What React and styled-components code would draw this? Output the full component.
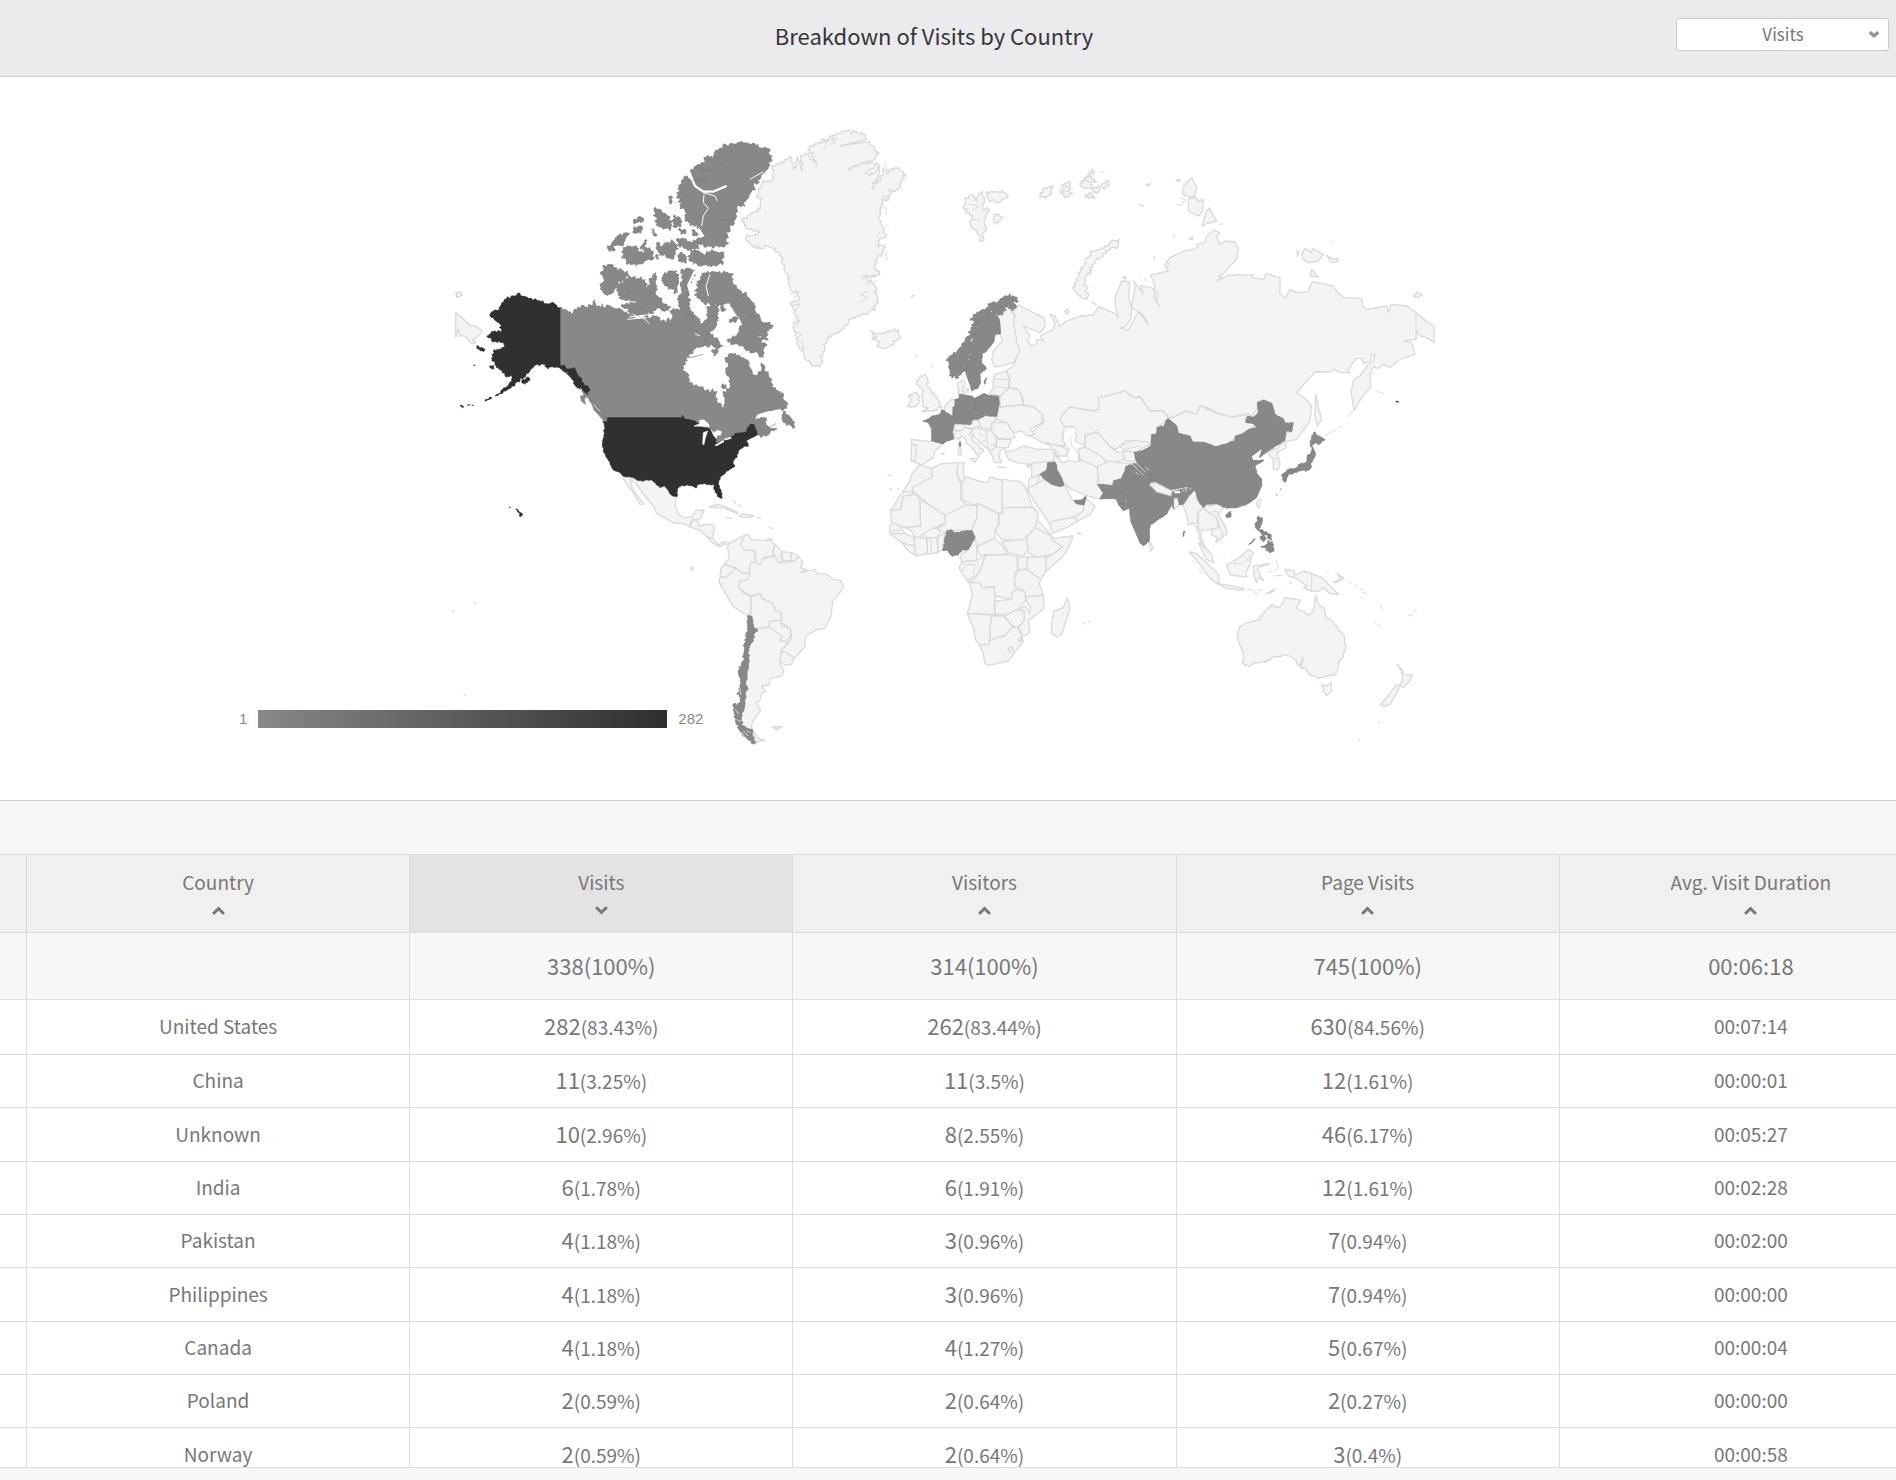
import React, { useState } from 'react';
import styled, { createGlobalStyle, css } from 'styled-components';

const GlobalStyle = createGlobalStyle`
  * {
    box-sizing: border-box;
  }
  body {
    margin: 0;
    background: #f7f7f7;
    color: #77777a;
    font-family: 'Noto Sans CJK SC', 'Open Sans', sans-serif;
  }
`;

// Styled components
const Page = styled.div`
  display: flex;
  flex-direction: column;
  height: 100vh;
  overflow: hidden;
`;

const Header = styled.header`
  display: grid;
  grid-template-columns: 192px 1fr 213px;
  padding: 18px 7px 0 0;
  height: 77px;
  flex: none;
  background: #ebebed;
  border-bottom: 1px solid #cfcfd2;
`;

const Title = styled.h1`
  grid-column: 2;
  margin: 0;
  font-size: 22px;
  font-weight: 400;
  line-height: 34px;
  text-align: center;
  color: #353537;
`;

const SelectBox = styled.div`
  position: relative;
  height: 33px;
`;

const MetricSelect = styled.select`
  appearance: none;
  width: 100%;
  height: 100%;
  padding: 0 0 2px 1px;
  border: 1px solid #c9c9cb;
  border-radius: 3px;
  background: #fff;
  color: #77777a;
  font-family: inherit;
  font-size: 17px;
  text-align: center;
  text-align-last: center;
`;

const SelectArrow = styled.svg`
  position: absolute;
  right: 9px;
  top: 12px;
  width: 12px;
  height: 9px;
  pointer-events: none;
`;

const MapPanel = styled.section`
  position: relative;
  flex: none;
  padding-top: 1px;
  background: #fff;
  border-bottom: 1px solid #cdcdcf;
`;

const MapDrawing = styled.svg`
  display: block;
  width: 1000px;
  max-width: 100%;
  margin: 0 auto;
`;

const Legend = styled.div`
  position: absolute;
  left: 239px;
  bottom: 71px;
  display: flex;
  align-items: center;
  gap: 11px;
  font-family: 'Liberation Sans', Arial, sans-serif;
  font-size: 15px;
  line-height: 20px;
  color: #888;
`;

const LegendBar = styled.div`
  width: 409px;
  height: 18px;
  background: linear-gradient(to right, #888, #2e2e2e);
`;

const TableArea = styled.section`
  flex: 1;
  min-height: 0;
  margin-top: 53px;
  margin-bottom: 12px;
  overflow: hidden;
  border-top: 1px solid #dcdcdd;
  border-bottom: 1px solid #dcdcdd;
`;

const Table = styled.table`
  width: calc(100% + 47px);
  table-layout: fixed;
  border-collapse: separate;
  border-spacing: 0;
  text-align: center;
`;

const cellBorders = css`
  padding: 0;
  border-right: 1px solid #dcdcdd;
  border-bottom: 1px solid #dcdcdd;
  font-weight: 400;
`;

const HeadCell = styled.th`
  ${cellBorders}
  width: ${props => props.$narrow ? '27px' : 'auto'};
  height: 78px;
  background: ${props => props.$active ? '#e3e3e3' : '#f0f0f0'};
`;

const SortButton = styled.button`
  display: flex;
  flex-direction: column;
  align-items: center;
  justify-content: center;
  gap: 10px;
  width: 100%;
  height: 77px;
  padding: 0 0 4px;
  border: none;
  background: none;
  color: inherit;
  font-family: inherit;
  font-size: 19px;
  line-height: 28px;
  cursor: pointer;
`;

const SortArrow = styled.svg`
  width: 13px;
  height: 9px;
  transform: ${props => props.$down ? 'rotate(180deg)' : 'none'};
`;

const TotalCell = styled.td`
  ${cellBorders}
  height: 67px;
  padding-bottom: 2px;
  background: #f7f7f7;
  font-size: 22px;
  line-height: 28px;
`;

const Row = styled.tr`
  height: 53px;
  background: #fff;

  &:nth-child(3n) {
    height: 54px;
  }

  &:first-child {
    height: 55px;
  }
`;

const Cell = styled.td`
  ${cellBorders}
  padding-bottom: 2px;
  font-size: 19px;
  line-height: 28px;
`;

const Count = styled.span`
  font-size: 22px;
`;

const COLUMNS = [
  { key: 'country', label: 'Country' },
  { key: 'visits', label: 'Visits' },
  { key: 'visitors', label: 'Visitors' },
  { key: 'pages', label: 'Page Visits' },
  { key: 'duration', label: 'Avg. Visit Duration' },
];

const TOTALS = ['', '338(100%)', '314(100%)', '745(100%)', '00:06:18'];

const ROWS = [
  ['United States', '282', '83.43%', '262', '83.44%', '630', '84.56%', '00:07:14'],
  ['China', '11', '3.25%', '11', '3.5%', '12', '1.61%', '00:00:01'],
  ['Unknown', '10', '2.96%', '8', '2.55%', '46', '6.17%', '00:05:27'],
  ['India', '6', '1.78%', '6', '1.91%', '12', '1.61%', '00:02:28'],
  ['Pakistan', '4', '1.18%', '3', '0.96%', '7', '0.94%', '00:02:00'],
  ['Philippines', '4', '1.18%', '3', '0.96%', '7', '0.94%', '00:00:00'],
  ['Canada', '4', '1.18%', '4', '1.27%', '5', '0.67%', '00:00:04'],
  ['Poland', '2', '0.59%', '2', '0.64%', '2', '0.27%', '00:00:00'],
  ['Norway', '2', '0.59%', '2', '0.64%', '3', '0.4%', '00:00:58'],
];

const FILLS = {
  land: ['#f4f4f4', '#dadada'],
  mid: ['#888', '#787878'],
  dark: ['#303030', '#2b2b2b'],
  water: ['#fff', '#fff'],
};

// Each sheet is a part of the world with its own origin. One outline per line,
// rough sets how ragged the coast gets.
const SHEETS = [
  {
    // Arctic Canada, Alaska and the mainland
    x: 1320, y: 360,
    shapes: [
      { kind: 'land', rough: 0, d: `
47,575 75,598 90,613 105,615 118,622 127,632 110,650 98,656 108,665 95,668 75,645 60,645 55,625 47,650
47,516 60,513 67,522 52,530
36,1469 42,1471
104,1445 108,1447
71,1722 75,1724
1222,565 1226,566
1266,556 1270,558` },
      { kind: 'mid', rough: 5, d: `
752,150 775,130 790,125 800,105 815,115 822,95 835,85 850,70 860,75 870,67 890,68 905,62 920,65 935,70 955,70 965,82 980,82 985,95 997,105 997,118 975,148 968,155 950,190 940,195 930,220 918,240 905,252 890,262 890,285 882,310 870,315 862,345 862,370 850,378 830,375 800,378 770,372 765,362 785,350 795,345 785,325 778,315 760,312 745,305 735,290 735,270 722,255 712,225 715,195 725,190 730,170 740,165 752,178
748,385 775,390 790,400 825,390 852,397 852,405 850,425 830,435 780,433 760,430 750,410
642,262 660,265 665,275 680,280 690,290 693,320 680,322 670,325 655,315 645,300
700,285 720,290 725,305 720,318 705,320
685,228 692,225 697,240 692,250
580,300 600,287 610,292 610,303 590,305
580,322 605,315 608,325 600,337 585,337
502,380 515,370 530,345 545,343 560,335 562,345 555,360 545,375 530,372 520,390 508,392
550,385 560,375 575,378 590,375 600,395 612,395 615,388 603,375 617,355 620,380 640,390 640,415 620,418 600,428 587,436 570,425 545,412
635,325 642,330 650,345 642,345
650,365 660,370 665,382 675,365 700,362 708,370 707,400 695,415 680,410 668,405 655,395 648,380
715,325 738,328 738,337 722,338
755,330 765,328 775,340 760,345
710,360 715,352 740,355 745,362 770,362 775,375 765,385 740,385 720,380
720,395 735,400 740,425 725,425 715,410
645,405 655,403 655,415
488,437 515,430 525,440 555,455 568,462 535,490 525,505 520,515 503,524 480,505 490,470
540,490 570,465 590,475 615,475 620,500 628,478 640,460 648,455 648,500 655,535 690,555 680,568 650,560 635,578 590,585 570,572 550,560 545,550 585,543 545,538 535,520 530,500
672,460 690,450 710,450 715,480 712,505 705,520 695,505 675,495 665,480
722,448 745,442 765,450 758,470 742,490 750,520 750,550 735,562 715,555 715,530 725,500
800,455 835,453 870,458 880,475 878,485 890,500 905,510 920,520 935,540 945,555 948,575 960,590 975,605 990,612 995,622 985,630 980,658 965,645 945,632 960,650 972,665 970,710 955,700 940,695 920,690 905,675 885,668 865,665 862,650 890,645 892,620 903,605 885,585 870,580 860,545 840,552 810,550 790,545 770,530 768,505 775,480 785,460
790,650 803,630 820,645 850,675 835,682 800,675 785,678
815,692 825,683 835,690 825,705
845,793 858,790 856,802 848,803` },
      { kind: 'mid', rough: 4, d: `
360,560 398,577 402,566 410,570 412,560 424,562 432,554 442,560 446,550 460,552 462,536 468,548 480,560 486,548 492,562 500,552 520,560 545,566 560,572 570,586 600,592 620,586 632,600 640,582 650,585 665,600 695,598 698,582 690,570 702,562 712,572 720,558 733,560 745,550 752,565 770,590 780,600 790,606 802,585 802,556 830,555 838,570 835,590 832,610 820,628 803,628 795,650 785,677 765,683 750,700 735,725 730,750 745,760 748,782 800,808 830,810 829,840 848,860 855,848 848,815 868,800 870,775 858,750 865,735 855,715 865,700 880,700 900,705 925,720 932,745 948,765 965,745 965,725 975,740 990,770 1000,800 1030,820 1030,835 1042,845 1040,862 1025,868 980,872 958,882 940,895 985,885 975,900 985,915 1000,905 1008,918 1010,925 990,935 965,950 950,938 900,950 830,972 780,960 700,900 500,900 478,872 460,850 445,832 430,830 425,800 360,740
1030,870 1040,880 1050,888 1064,905 1064,920 1050,910 1030,905 1025,895` },
      { kind: 'water', rough: 3, d: `
865,548 880,570 903,605 890,640 862,655 845,672 830,645 822,628 838,600 845,570
945,700 955,705 960,730 948,762 936,745 932,725` },
      { kind: 'mid', rough: 3, d: `
868,600 880,588 895,590 885,605
840,560 850,556 858,566 846,572` },
      { kind: 'water', line: 7, d: `
750,160 765,195 790,212 820,212 860,195
765,450 745,492 758,540 790,570 790,600
860,690 890,685 920,697 965,715` },
      { kind: 'water', line: 3, d: `
790,215 825,225 832,240
792,220 790,245 805,262 790,285 785,315
930,175 970,152
568,588 635,580
610,590 628,608
562,595 620,590
720,450 718,500 712,530
765,638 780,645
540,540 588,543
810,460 798,495 805,525` },
      { kind: 'mid', line: 2, d: `
760,180 800,172
775,200 790,180 800,188
850,140 830,110
880,100 872,80
900,90 892,72
940,110 925,95
800,150 770,140
740,560 745,590
790,470 775,500
820,150 790,145
880,245 860,230
740,240 760,232
730,215 745,225
750,710 790,700
745,620 775,630
740,690 765,688
985,640 960,620
930,560 910,540
905,530 885,520
890,510 872,505
950,590 925,580
600,570 610,550
640,510 625,530
560,500 575,520
510,450 525,460
840,300 880,295
845,325 870,320
835,350 860,345
700,590 712,610
730,590 728,615
760,600 755,580
870,720 890,730
970,760 955,750
1000,805 980,800` },
      { kind: 'dark', rough: 3, d: `
235,516 245,525 270,532 290,538 320,548 342,546 360,560 360,733 375,735 382,745 402,740 410,755 430,785 445,800 443,822 428,808 405,792 395,770 375,748 350,738 320,738 310,730 285,733 270,750 250,770 220,795 205,805 165,825 200,798 215,780 222,765 195,765 188,750 170,740 165,730 155,710 160,690 180,683 195,675 190,663 160,663 140,645 160,632 185,628 180,610 165,598 150,585 155,572 175,568 185,545 200,530 220,525
110,675 135,685 130,692 112,684
148,738 160,732 160,745
245,780 265,768 270,775 255,790
135,840 153,828 155,832
60,853 72,856 68,860
82,854 90,852
95,852 101,854
100,732 106,734
207,1158 212,1160
227,1165 235,1168 248,1182 240,1187 237,1175` },
      { kind: 'mid', rough: 0, d: `
422,824 432,826 436,850 424,840
446,826 470,850 500,892 490,898 462,866` },
      { kind: 'water', line: 2, d: `
422,800 428,822
440,826 452,850
460,850 482,872
436,838 446,856` },
    ],
  },
  {
    // United States and Mexico
    x: 1320, y: 810,
    shapes: [
      { kind: 'land', rough: 0, d: `
548,617 570,620 598,630 637,628 660,650 672,645 685,660 695,673 708,678 705,700 715,728 730,740 755,738 768,718 792,717 783,740 770,748 757,745 748,768 730,757 705,757 650,728 640,705 612,672 590,640 570,625 578,655 612,700 600,700 580,665 560,640` },
      { kind: 'dark', rough: 2, d: `
488,450 500,452 503,440 725,440 728,433 733,443 768,452 790,470 815,475 825,500 830,518 850,508 873,500 885,488 918,483 930,460 942,460 952,490 930,503 918,510 926,525 915,525 895,540 890,560 880,570 883,588 862,600 840,617 836,635 845,665 845,683 835,678 822,655 820,640 805,640 790,638 772,640 770,650 745,643 725,643 712,655 710,678 695,672 685,658 672,643 660,650 637,627 598,628 570,617 548,615 537,603 520,597 510,578 500,560 490,540 488,515 493,490 493,465` },
      { kind: 'water', rough: 0, d: `
762,465 780,458 778,448 792,447 805,458 808,468 790,466
788,520 790,485 803,480 796,500 792,520
813,475 822,485 832,478 844,482 842,492 832,492 828,502 820,492
825,523 850,508 852,512 830,524
853,504 872,499 874,502 856,507
955,430 1020,415 1028,422 1020,445 1008,455 1010,470 990,470 980,455 985,440 960,436` },
      { kind: 'mid', line: 2, d: `
985,470 1008,458
940,448 905,480` },
    ],
  },
  {
    // Greenland and Iceland
    x: 2040, y: 360,
    shapes: [
      { kind: 'land', rough: 4, d: `
275,138 335,110 342,145 352,108 368,150 362,120 375,95 385,98 408,138 412,128 390,90 388,78 415,65 440,55 460,42 490,30 530,32 555,42 560,55 480,75 565,62 575,75 597,98 585,115 510,140 508,148 540,130 590,125 580,145 555,155 565,160 590,150 598,130 595,165 577,203 605,165 610,140 622,160 632,145 655,140 677,160 655,205 640,210 625,205 635,215 620,240 605,235 600,285 595,290 605,310 620,345 600,355 590,375 615,370 605,400 590,410 585,440 600,460 575,468 548,465 585,490 590,515 595,545 565,575 545,583 510,595 490,625 465,638 440,650 435,680 425,710 420,738 400,735 378,715 365,690 350,665 345,640 340,605 355,600 345,570 330,545 355,540 350,515 328,500 322,460 305,425 298,395 262,375 235,385 205,365 198,348 235,340 240,332 205,325 185,300 195,290 240,265 247,232 228,225 235,205 255,182 278,175 282,150
572,630 585,640 610,635 640,630 655,628 660,650 640,670 615,683 590,675 600,660 575,655 590,648
695,530 703,523` },
      { kind: 'land', line: 3, d: `
330,520 358,512 340,535
332,555 360,548 338,580
340,590 362,600 345,620
345,630 365,640 350,655
365,660 372,690
545,475 585,460 560,490 590,480
535,545 565,530 540,520 570,510
610,260 620,262 618,280
605,225 630,228 610,240
620,310 626,318
600,330 590,350
615,390 622,420
612,125 622,148
430,65 470,50 450,75
395,75 440,60 435,85
455,45 465,70` },
    ],
  },
  {
    // Russia, the Arctic islands
    x: 3180, y: 480,
    shapes: [
      { kind: 'land', rough: 0, d: `
-125,432 -50,470 -43,495 -60,515 -110,495 -90,525 -98,540 -85,555 -72,550 -70,535 -50,540 -60,525 -20,505 -15,485 -30,460 -15,465 0,497 15,482 60,465 100,462 115,437 165,458 175,470 165,430 165,410 185,360 210,362 205,410 215,440 212,475 195,498 180,500 205,508 225,470 235,452 265,490 250,462 215,440 225,380 222,360 235,380 250,400 240,375 275,380 293,400 290,420 300,438 282,410 285,375 272,342 325,330 315,310 330,290 370,270 400,265 415,258 410,250 435,245 440,225 462,207 478,215 470,230 480,250 495,240 525,243 535,265 530,295 505,320 490,340 475,345 485,350 470,360 500,345 535,340 550,343 580,340 575,350 612,355 618,337 640,345 660,350 660,395 675,413 690,385 710,395 745,392 750,375 757,362 820,375 830,390 850,410 905,412 908,435 920,445 980,435 985,455 992,430 1040,435 1068,455 1105,485 1122,495 1122,545 1100,530 1080,525 1070,510 1068,535 1030,540 1055,545 1065,580 1020,595 990,620 970,610 955,622 940,618 930,640 932,680 905,710 882,748 873,690 882,655 900,645 925,610 940,600 945,580 935,580 930,600 912,608 905,592 888,592 862,630 870,635 840,635 825,625 810,633 765,633 710,695 735,712 755,735 750,780 710,835 685,840 670,845 675,820 690,812 700,785 670,785 647,765 635,725 612,717 592,722 592,745 575,765 560,758 510,770 470,755 440,740 420,735 410,762 375,750 330,772 310,750 270,750 240,708 220,710 195,690 160,700 115,712 118,745 100,750 30,740 5,765 15,795 5,820 15,855 -40,850 -60,840 -90,825 -70,800 -50,785 -52,760 -80,738 -110,730 -110,715 -125,685 -152,680 -150,655 -162,630 -140,615 -122,570 -132,545 -140,485 -135,465 -140,450
725,280 735,262 755,275 757,262 790,280 775,300 745,305 728,295
800,283 815,293 835,293 830,305 812,303
755,325 775,348 750,345
1060,405 1072,393 1087,402 1070,410
768,700 775,740 785,775 772,795 764,760
370,75 395,50 410,80 405,105 385,108 368,100
385,115 405,108 415,120 430,115 428,150 415,165 385,150
425,197 440,150 450,140 455,155 470,180 440,188
348,56 362,56 355,62
258,72 270,68 268,74
238,130 250,136
14,452 22,444 28,452 20,460
186,350 198,346 198,354
712,268 716,276 712,285
338,228 345,222
388,234 398,226 398,234
282,286 284,294
95,422 108,430` },
      { kind: 'land', rough: 4, d: `
40,385 55,345 70,320 75,300 95,270 130,262 160,238 178,235 175,250 130,280 105,300 90,330 75,350 75,375 85,405 82,415 60,410 50,395
-285,115 -262,100 -250,120 -240,95 -225,110 -232,140 -210,145 -228,175 -222,200 -235,240 -250,215 -268,190 -262,165 -285,150
-222,95 -190,92 -165,95 -160,112 -190,125 -215,118
-190,160 -172,168 -190,190 -200,175
0,95 12,70 30,60 25,90 38,98 15,110
60,72 85,40 100,25 90,50 110,62 90,70 100,82 75,82
75,105 90,95 105,112
100,82 120,76 115,95 102,96
125,72 145,58 148,72 130,82
-50,85 -20,75 -35,105 -62,110` },
      { kind: 'land', line: 3, d: `
0,68 22,78 5,90 28,92
60,60 90,62 70,52 100,45
360,110 378,118 365,126
350,130 368,132
1068,455 1068,535
795,825 830,805
835,802 846,794
865,768 868,762
868,758 880,750
950,690 962,697
966,695 972,700
935,640 945,630
120,32 134,34
478,190 490,188
320,300 328,310 315,322
815,246 823,241
252,350 262,362
235,345 240,350
-275,130 -245,135 -262,150
-260,175 -235,180` },
      { kind: 'dark', rough: 0, d: `
1007,722 1012,720 1016,724` },
    ],
  },
  {
    // Europe
    x: 2640, y: 840,
    shapes: [
      { kind: 'land', rough: 0, d: `
368,102 380,75 395,92 405,105 400,125 408,165 410,185 420,210 400,245 375,252 345,258 335,235 340,210 368,180 360,160 358,115 350,98
195,375 215,355 225,355 222,400 215,405 192,388
225,430 255,430 258,440 240,450 222,448
255,425 272,432 282,418 302,420 300,435 275,442 255,437
295,415 318,403 350,407 345,420 330,440 310,445 300,435
275,445 300,440 320,450 335,445 345,460 350,480 345,500 355,520 345,540 335,520 325,505 300,485 280,465
335,425 380,425 400,450 405,470 385,475 350,470 335,450
350,475 395,475 385,500 350,500
330,510 345,500 380,500 360,510 358,530 365,545 345,545
355,380 385,375 425,372 460,378 488,400 485,425 450,445 465,460 440,465 425,450 400,455 380,425 350,415
360,345 385,322 415,325 425,345 430,370 360,378
345,280 380,270 388,295 385,322 360,345 328,338 340,320 340,295
375,510 395,510 430,495 470,505 520,505 525,540 480,545 450,550 410,545 385,535
500,485 545,497 565,505 560,525 530,525 520,505
92,475 155,482 190,488 165,510 160,530 125,552 110,545 95,540 100,500
95,490 110,492 105,540 93,540
270,532 292,532 285,545
235,500 245,502 243,522 235,520
440,555 452,550 446,560
355,558 378,560
185,518 193,516 190,520
24,583 32,584
108,224 112,228
156,255 158,262` },
      { kind: 'land', rough: 3, d: `
118,290 135,280 145,300 140,310 155,335 170,345 180,370 185,380 160,390 125,392 145,380 125,375 130,345 125,325 110,310 115,295
85,345 110,335 118,345 115,370 90,380 82,375 95,360
222,448 240,450 258,440 275,445 268,460 285,485 310,505 305,515 295,530 285,510 265,490 245,465 220,475
232,310 250,295 255,310 248,330 255,338 238,338
258,325 266,325 264,335` },
      { kind: 'land', line: 3, d: `
340,295 385,295
342,318 360,318 385,322
300,440 298,460 320,465 322,450
320,465 325,505
345,490 330,495
300,485 320,475
525,505 540,540
335,450 325,445` },
      { kind: 'mid', rough: 4, d: `
415,60 400,65 410,78 395,90 385,72 375,78 368,102 345,98 330,92 315,100 298,115 290,145 280,170 270,190 272,215 265,245 262,270 245,275 230,292 215,285 207,262 205,225 220,220 235,205 250,185 265,165 272,140 285,120 270,118 290,95 310,85 330,68 350,65 365,52 385,45 405,48` },
      { kind: 'mid', rough: 1, d: `
330,92 345,95 358,115 362,158 345,162 340,185 315,215 308,215 305,245 320,262 300,280 302,305 295,320 275,330 270,310 260,285 258,272 265,245 272,215 270,190 280,170 290,145 298,115 315,100
312,300 320,290 315,310
238,340 255,342 275,345 283,352 285,370 285,385 265,395 280,412 272,430 235,428 220,425 218,380 225,375 225,355 237,352
283,352 312,337 325,343 355,345 358,365 350,405 325,405 300,392 285,385
265,395 285,385 300,390 318,402 295,415 280,415
185,385 207,400 230,412 222,430 218,450 220,475 200,480 190,488 155,480 155,445 145,425 128,420 150,412 155,405 180,400
240,480 243,490 240,498 236,490` },
    ],
  },
  {
    // Africa and the Middle East
    x: 2640, y: 1290,
    shapes: [
      { kind: 'land', rough: 0, d: `
118,102 155,112 157,138 100,170 97,182 68,182 90,150 95,130
68,182 97,182 97,192 70,195 62,235 32,238
155,112 185,98 235,95 230,130 243,160 243,205 260,222 195,258 100,182 97,170 157,138
235,95 252,95 250,130 257,140 245,158 230,128
257,137 295,150 322,155 330,138 367,148 367,248 350,245 295,218 280,222 245,205 245,160
367,145 420,152 435,165 458,228 367,230
32,238 62,235 70,195 97,192 97,182 120,205 122,285 75,290 60,285 35,275
120,205 195,252 197,275 155,295 130,310 118,320 100,315 95,300 75,290 122,285
195,252 260,222 280,222 292,225 290,260 275,298 210,298 195,305 172,292 197,278
292,225 295,218 355,248 355,280 345,300 345,322 290,345 277,330 283,315 275,298 290,260
367,230 462,230 475,255 465,290 440,320 430,330 365,325 345,300 357,280 357,248 367,248
365,332 430,325 440,315 450,350 430,375 385,365
465,290 495,295 515,315 520,325 548,348 515,372 470,378 445,365 440,320
465,290 470,268 480,275 515,315
515,322 578,315 575,330 550,375 497,422 498,378 515,372 548,348 520,330
443,378 498,378 497,422 482,445 440,415
415,378 443,378 440,415 413,415
413,418 440,415 482,445 478,460 490,492 440,498 430,478 405,465 402,430
315,372 370,370 410,375 413,415 403,430 405,465 410,478 395,485 395,505 345,495 342,468 305,470 300,455 268,455 290,435 300,420
290,348 345,322 385,365 370,370 315,372 300,375
240,375 265,355 285,320 290,345 290,390 245,392
237,412 245,392 285,390 315,378 300,420 270,445 265,455
268,455 300,455 305,470 342,468 345,495 343,545 355,552 262,548 278,490
345,510 395,505 395,485 412,475 435,482 437,508 415,535 375,553 345,548
437,498 490,492 492,533 445,568 450,605 430,615 415,590 432,568 432,540 412,535 437,525 448,545 452,530 440,512
372,555 412,535 432,540 432,568 415,590 398,585
335,555 372,555 398,588 375,615 355,618 330,630 330,590
262,548 350,552 335,555 330,590 328,640 310,645 300,642 288,630 280,590
300,642 328,640 330,628 355,618 375,615 398,588 415,590 430,630 385,690 325,703 315,698 310,670
383,655 395,647 400,655 388,663
415,622 425,620 424,630 415,630
562,502 570,530 545,612 530,618 515,608 515,580 522,540 550,530
28,290 35,275 60,285 75,308 30,308
30,308 75,308 100,318 105,345 80,340 65,335
65,335 80,340 105,345 107,373 85,360
102,320 140,322 142,368 107,375 105,345
142,320 170,320 175,365 142,370
130,310 155,292 172,292 180,308 170,320 130,320
172,320 195,305 188,358 175,360
455,97 505,92 500,115 480,130 455,140
448,143 480,133 470,160 450,170 443,180 446,155
525,70 545,95 565,90 600,85 650,100 655,130 652,155 670,185 660,205 615,192 570,172 545,150 530,115 520,92
445,170 470,160 490,145 540,167 555,165 580,210 612,220 610,240 585,258 550,270 520,275 510,280 490,250 462,210 445,180
510,280 520,270 585,258 592,272 560,290 517,307
612,215 615,200 645,225 630,250 590,272 585,258 610,240
592,306 602,308
28,174 36,174
52,174 56,172
610,577 614,580
625,573 629,571` },
      { kind: 'land', line: 3, d: `
400,422 412,428 405,438
245,392 252,402 285,400 278,430
255,405 245,420
458,230 480,245
427,160 440,180
152,320 155,365
30,300 60,298
555,162 562,170` },
      { kind: 'mid', rough: 0, d: `
503,95 525,93 530,102 530,115 545,140 552,162 540,167 515,160 490,142 480,130 500,118
583,208 605,207 617,195 618,202 612,222 588,218` },
      { kind: 'mid', rough: 2, d: `
200,298 215,297 225,305 275,298 285,318 265,355 245,358 235,372 215,375 205,360 188,358` },
    ],
  },
  {
    // Central and South America
    x: 2040, y: 1500,
    shapes: [
      { kind: 'land', rough: 0, d: `
50,55 58,75 78,70 100,70 103,80 98,112 80,107 60,88 30,78 38,60
82,110 98,112 115,132 130,122 148,125 150,135 132,128 120,138 100,128
148,128 175,112 195,102 198,110 182,128 190,145 225,150 225,180 228,188 212,185 210,218 185,215 165,200 132,190 145,175 148,160 142,140
195,102 205,100 215,115 250,118 270,117 285,130 278,155 280,165 250,170 240,192 228,185 225,150 190,145 182,128
285,130 305,152 303,165 310,185 295,185 283,165 280,150
305,152 335,155 332,178 308,180
335,155 355,165 345,180 332,178
212,185 228,185 240,192 250,172 285,165 295,185 345,180 355,165 368,185 360,200 380,205 360,215 405,205 410,218 440,220 460,235 482,238 490,255 480,275 458,302 453,345 435,382 412,385 377,405 375,437 350,465 340,475 303,450 330,420 335,408 330,382 303,365 303,335 285,328 280,308 245,292 243,278 215,285 205,280 195,275 175,258 180,240 205,232
118,232 132,225 165,200 185,215 210,218 205,235 180,240 175,258 190,275 205,283 215,290 210,340 205,345 160,317 135,275 118,245
132,190 165,202 150,218 135,230 120,225 122,205
215,285 243,278 245,292 280,308 285,328 303,335 305,358 270,360 267,378 255,380 232,383 222,380 212,345
270,360 303,358 305,375 330,382 332,405 318,423 298,420 305,405 265,380
232,383 267,378 305,405 298,420 325,422 303,450 300,490 312,510 305,525 270,533 268,552 245,555 258,572 245,575 240,598 228,605 242,628 225,650 215,670 215,685 220,690 235,712 255,718 225,722 217,685 190,682 180,655 195,600 198,530 207,480 205,440 220,420 222,400
313,452 342,470 335,490 315,492 300,485 302,460
88,18 110,10 130,15 175,35 170,38 130,20 100,20
178,46 190,38 222,45 205,50
140,50 155,52
230,50 242,51
35,198 40,202 35,208
277,677 290,676 305,677 290,686
262,112 280,116
270,80 278,82
160,0 166,6
176,12 182,18` },
      { kind: 'mid', rough: 3, d: `
203,345 215,345 222,380 232,385 220,398 220,420 207,435 207,480 200,530 198,590 195,605 183,650 190,680 217,685 218,715 230,725 222,730 190,705 178,685 165,660 160,610 178,605 182,590 170,580 180,560 185,545 175,515 190,480 193,430 203,375` },
      { kind: 'water', line: 2, d: `
180,562 182,582
166,625 176,640
178,600 170,612
170,655 182,662
190,690 205,705
200,690 212,695
186,695 196,712` },
    ],
  },
  {
    // Asia
    x: 3180, y: 1110,
    shapes: [
      { kind: 'land', rough: 0, d: `
5,135 30,108 100,120 118,115 115,80 160,70 195,60 220,80 240,78 270,120 310,120 325,143 300,165 290,170 290,190 275,190 273,225 200,208 180,225 170,235 150,228 115,190 75,200 75,225 45,210 50,190 40,165 15,168 0,145
75,190 115,185 150,228 175,245 200,240 190,265 150,280 115,250 75,240 60,270 55,235 75,228
180,225 220,208 275,215 225,245 200,245
190,240 240,245 235,270 195,270
55,235 75,228 115,250 150,282 115,290 60,265
115,285 150,270 200,278 240,275 200,290 185,325 160,330 155,345 120,340 112,310
325,145 380,120 410,130 420,105 465,125 515,138 560,130 555,150 590,160 565,180 525,200 500,220 465,227 435,215 395,213 390,195 355,187 350,165
340,382 355,385 358,402 345,415 340,400
405,350 412,385 430,410 415,425 412,450 420,490 400,455 385,462 380,430 368,402 385,380
415,425 430,410 470,440 475,470 440,478 425,475 422,500 445,545 435,540 418,505 415,470
430,410 475,398 490,410 475,430 500,475 500,490 468,515 470,500 455,490 455,475 480,470 470,440 445,425
415,515 430,525 455,550 460,575 440,565
268,510 280,530 272,540
623,245 655,230 675,208 678,230 650,245 660,275 655,295 640,295 640,265
595,385 603,385 597,412 588,400
53,487 62,489` },
      { kind: 'land', line: 3, d: `
75,200 100,185 115,175
195,235 240,225
445,425 470,420 495,470
640,262 656,262
480,470 490,490 468,505` },
      { kind: 'water', rough: 0, d: `
10,185 25,170 45,168 50,182 38,195 30,202 35,222 55,248 55,272 30,270 20,255 28,235 10,208` },
      { kind: 'land', line: 3, d: `
10,185 25,170 45,168 50,182 38,195 30,202 35,222 55,248 55,272 30,270 20,255 28,235 10,208 10,185` },
      { kind: 'mid', rough: 1, d: `
198,285 235,275 265,290 260,300 230,320 215,345 185,365 195,390 200,415 185,410 165,383 120,383 130,365 112,340 160,343 160,330 185,322 195,300
325,143 350,165 355,187 390,195 397,213 435,215 468,227 500,218 525,208 525,195 545,190 565,175 590,170 580,157 557,155 562,135 580,138 595,125 592,95 612,87 635,98 645,130 670,143 675,157 700,155 695,182 678,180 675,208 625,240 610,250 598,260 605,235 585,248 575,256 578,268 612,268 585,285 590,305 605,325 605,345 590,380 560,400 530,410 500,412 470,398 440,400 430,410 418,395 410,375 405,350 380,348 345,355 320,355 272,330 268,310 260,290 235,278 228,268 222,245 245,240 273,225 275,190 290,190 292,168 312,165 318,148
497,432 512,420 513,438 500,440
230,310 265,300 275,330 268,345 330,372 340,360 405,347 408,355 390,370 370,400 358,402 355,380 340,380 340,415 335,400 320,430 270,462 268,510 250,525 240,515 212,450 208,410 190,420 175,400 200,395 185,365 215,345` },
      { kind: 'mid', rough: 3, d: `
762,183 775,195 795,205 780,218 765,215 750,225 750,210
755,228 765,240 765,255 755,275 750,295 720,300 700,305 675,318 665,312 685,295 710,290 725,275 735,275 750,250
665,312 680,308 680,325 675,335 667,325
592,438 607,440 605,460 598,475 610,480 620,490 605,490 588,472 585,460
603,530 620,520 638,512 642,535 632,545 615,530
600,500 612,492 618,505 608,512
615,482 632,490 634,508 622,500
622,512 630,510 628,520
567,522 585,502 580,512
370,482 373,480 371,497
688,300 705,298 700,308 690,310
648,373 652,370
660,356 664,353` },
      { kind: 'land', rough: 0, d: `
270,340 285,335 335,360 332,374 290,362` },
      { kind: 'water', rough: 0, d: `
343,362 358,360 360,366 345,366
578,258 604,236 598,252 585,264` },
      { kind: 'land', line: 3, d: `
215,278 235,297
228,275 258,305
226,302 236,312
238,300 250,312
256,288 266,296
366,362 372,355
376,362 382,352
388,357 394,350` },
    ],
  },
  {
    // Indonesia, Australia and the Pacific
    x: 3540, y: 1500,
    shapes: [
      { kind: 'land', rough: 0, d: `
140,190 155,185 190,160 205,145 220,155 212,170 210,190 198,215 200,228 150,222
28,153 50,158 80,185 115,220 118,245 105,245 80,220 60,190
110,248 140,252 190,262 190,268 140,262
220,195 270,188 240,198 232,205 250,240 235,230 230,245 222,225
315,205 340,208 345,222 370,210 395,218 430,232 445,250 475,280 450,278 430,260 415,272 395,270 370,262 380,255 350,232 325,225
425,550 440,555 453,545 455,570 440,583 432,575
650,490 665,505 672,520 697,522 690,540 670,560 658,552 668,540 665,510
600,612 620,590 650,550 658,560 645,585 630,610 615,615
258,278 285,264 275,275
472,218 492,232 470,244 460,245 480,235
362,502 370,470 374,500` },
      { kind: 'land', rough: 2, d: `
187,487 193,465 172,410 178,378 205,365 238,355 255,330 275,312 300,320 315,290 362,298 348,320 388,342 400,325 408,285 415,310 432,320 438,348 460,362 475,385 493,405 497,440 490,465 475,485 468,520 440,525 415,532 390,520 375,500 362,502 370,470 357,495 342,472 318,462 278,468 255,485 225,485 210,497` },
      { kind: 'land', line: 3, d: `
395,218 395,272
160,188 190,188 210,165
200,265 225,268
232,266 250,268
220,276 232,278
290,180 295,200 285,210
280,225 310,222
265,212 275,212
330,240 332,250
318,258 322,262
505,240 515,250
522,252 530,257
538,262 550,266
545,272 558,280
545,290 552,292
600,312 610,328
582,362 604,380
685,345 698,340
700,332 710,328
690,352 696,354
609,620 613,622
595,668 600,660
538,714 538,722
35,175 45,185
55,205 70,222
130,166 134,168
440,214 446,216
418,542 422,544
280,160 284,164` },
    ],
  },
];

// Breaks every edge into short steps and pushes them off the line a little,
// now and then far enough to look like a fjord
const roughen = (points, amount) => {
  let seed = 7;
  const next = () => {
    seed = (seed * 16807) % 2147483647;
    return seed / 2147483647 - 0.5;
  };
  const out = [];
  points.forEach(([x, y], i) => {
    const [nx, ny] = points[(i + 1) % points.length];
    const length = Math.hypot(nx - x, ny - y);
    out.push([x, y]);
    // straight borders stay straight
    if (length > 70) return;
    const steps = Math.floor(length / 4);
    for (let s = 1; s < steps; s += 1) {
      const t = s / steps;
      const deep = amount > 2 && next() > 0.36 ? 2 : 1;
      const push = next() * amount * 2 * deep;
      out.push([
        Math.round(x + (nx - x) * t + ((ny - y) / length) * push),
        Math.round(y + (ny - y) * t - ((nx - x) / length) * push),
      ]);
    }
  });
  return out;
};

const parse = (line) => line.split(' ').map(pair => pair.split(',').map(Number));

const Shape = ({ kind, rough, line, d }) => {
  const [fill, stroke] = FILLS[kind];
  const outlines = d.trim().split('\n');

  if (line) {
    return (
      <g fill="none" stroke={stroke} strokeWidth={line}>
        {outlines.map((points, i) => <polyline key={i} points={points} />)}
      </g>
    );
  }
  return (
    <g fill={fill} stroke={stroke} strokeWidth={kind === 'land' ? 4 : 2} strokeLinejoin="round">
      {outlines.map((points, i) => (
        <polygon key={i} points={rough ? roughen(parse(points), rough).join(' ') : points} />
      ))}
    </g>
  );
};

const WorldMap = () => (
  <MapDrawing viewBox="1344 231 3000 2166" role="img" aria-label="World map of visits">
    {SHEETS.map((sheet, i) => (
      <g key={i} transform={`translate(${sheet.x} ${sheet.y})`}>
        {sheet.shapes.map((shape, j) => <Shape key={j} {...shape} />)}
      </g>
    ))}
  </MapDrawing>
);

const App = () => {
  const [metric, setMetric] = useState('visits');
  const [sortKey, setSortKey] = useState('visits');

  return (
    <Page>
      <GlobalStyle />
      <Header>
        <Title>Breakdown of Visits by Country</Title>
        <SelectBox>
          <MetricSelect
            aria-label="Metric"
            value={metric}
            onChange={(e) => setMetric(e.target.value)}
          >
            <option value="visits">Visits</option>
            <option value="visitors">Visitors</option>
            <option value="pages">Page Visits</option>
          </MetricSelect>
          <SelectArrow viewBox="0 0 12 9">
            <path d="M1 2.5 3 1 6 3.5 9 1 11 2.5V4L6 8 1 4Z" fill="#999" />
          </SelectArrow>
        </SelectBox>
      </Header>

      <MapPanel>
        <WorldMap />
        <Legend>
          <span>1</span>
          <LegendBar />
          <span>282</span>
        </Legend>
      </MapPanel>

      <TableArea>
        <Table>
          <thead>
            <tr>
              <HeadCell $narrow />
              {COLUMNS.map(column => (
                <HeadCell key={column.key} $active={column.key === sortKey}>
                  <SortButton onClick={() => setSortKey(column.key)}>
                    {column.label}
                    <SortArrow viewBox="0 0 13 9" $down={column.key === sortKey}>
                      <path d="M2 7 6.5 2.5 11 7" fill="none" stroke="currentColor" strokeWidth="3" strokeLinecap="round" />
                    </SortArrow>
                  </SortButton>
                </HeadCell>
              ))}
            </tr>
            <tr>
              <TotalCell />
              {TOTALS.map((total, i) => <TotalCell key={i}>{total}</TotalCell>)}
            </tr>
          </thead>
          <tbody>
            {ROWS.map(([country, visits, visitsPart, visitors, visitorsPart, pages, pagesPart, duration]) => (
              <Row key={country}>
                <Cell />
                <Cell>{country}</Cell>
                <Cell><Count>{visits}</Count>({visitsPart})</Cell>
                <Cell><Count>{visitors}</Count>({visitorsPart})</Cell>
                <Cell><Count>{pages}</Count>({pagesPart})</Cell>
                <Cell>{duration}</Cell>
              </Row>
            ))}
          </tbody>
        </Table>
      </TableArea>
    </Page>
  );
};

export default App;
